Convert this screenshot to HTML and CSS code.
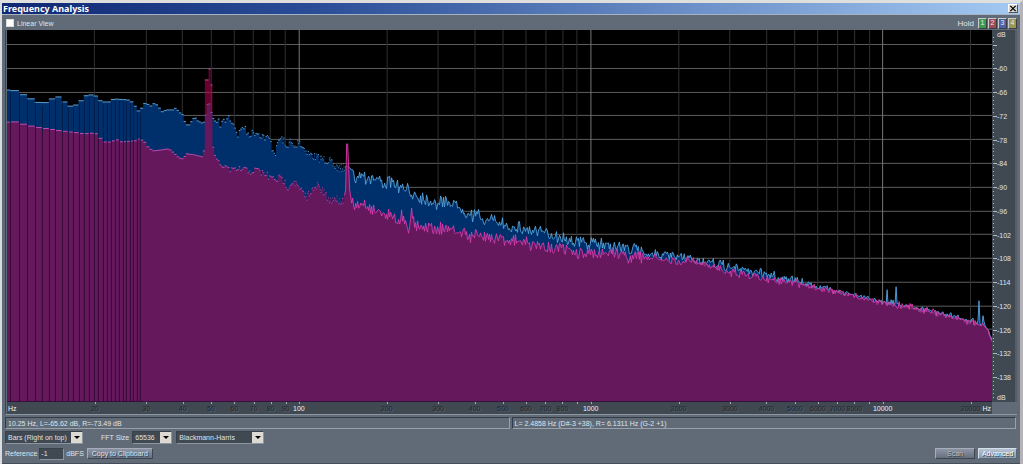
FILE: index.html
```html
<!DOCTYPE html>
<html lang="en">
<head>
  <meta charset="UTF-8">
  <title>Frequency Analysis</title>
  <link rel="stylesheet" href="styles.css">
</head>
<body>
  <div class="window">
    <header class="titlebar">
      <h1>Frequency Analysis</h1>
      <button class="close" type="button" aria-label="Close">
        <svg viewBox="0 0 9 9" width="9" height="9"><path d="M1.5 1.5l6 6M7.5 1.5l-6 6" stroke="#000" stroke-width="1.4"/></svg>
      </button>
    </header>

    <main class="content">
      <div class="toolbar">
        <label class="linear"><input type="checkbox"> Linear View</label>
        <div class="hold">
          <span>Hold</span>
          <button class="hold-btn green" type="button">1</button>
          <button class="hold-btn red" type="button">2</button>
          <button class="hold-btn blue" type="button">3</button>
          <button class="hold-btn yellow" type="button">4</button>
        </div>
      </div>

      <div class="graph">
        <svg id="plot" class="plot" viewBox="0 0 986 372" preserveAspectRatio="none"></svg>
        <div id="y-axis" class="y-axis"></div>
        <div id="x-axis" class="x-axis"></div>
      </div>

      <div class="status">
        <div class="status-cell">10.25 Hz, L=-65.62 dB, R=-73.49 dB</div>
        <div class="status-cell">L= 2.4858 Hz (D#-3 +38), R= 6.1311 Hz (G-2 +1)</div>
      </div>

      <form class="controls">
        <div class="row">
          <select class="mode" aria-label="Display mode"><option>Bars (Right on top)</option></select>
          <label class="fft" for="fft">FFT Size</label>
          <select class="size" id="fft"><option>65536</option></select>
          <select class="type" aria-label="Window type"><option>Blackmann-Harris</option></select>
        </div>
        <div class="row">
          <label for="ref">Reference</label>
          <input class="ref" id="ref" type="text" value="-1">
          <span class="unit">dBFS</span>
          <button class="btn copy" type="button">Copy to Clipboard</button>
          <button class="btn scan" type="button">Scan</button>
          <button class="btn advanced" type="button">Advanced</button>
        </div>
      </form>
    </main>
  </div>
  <script src="script.js"></script>
</body>
</html>
```
FILE: styles.css
```css
* {
  box-sizing: border-box;
}
body {
  margin: 0;
  background: #616b78;
  color: #dfe4ea;
  font-family: "Liberation Sans", Arial, sans-serif;
  font-size: 7px;
  line-height: 9px;
}
button, input, select {
  font: inherit;
  color: inherit;
  margin: 0;
}
.window {
  display: flex;
  flex-direction: column;
  min-height: 100vh;
  border-style: solid;
  border-width: 3px 3px 2px 2px;
  border-color: #dfe0dd #b5b2b8 #aaaab6 #d9dcdf;
}
.titlebar {
  display: flex;
  align-items: center;
  justify-content: space-between;
  height: 12px;
  padding: 0 2px 0 1px;
  background: linear-gradient(to right, #0f2873, #2a4c96 30%, #a4c9f2);
  border-bottom: 1px solid #a7b3c4;
}
.titlebar h1 {
  margin: 0;
  color: #fff;
  font: bold 9px/11px "Noto Sans", sans-serif;
}
.close {
  display: flex;
  align-items: center;
  justify-content: center;
  width: 10px;
  height: 9px;
  padding: 0;
  background: #d8d5ce;
  border: 1px solid;
  border-color: #fff #555 #555 #fff;
}
.content {
  flex: 1;
  display: flex;
  flex-direction: column;
  padding: 1px 3px 2px;
  border-bottom: 1px solid #454d58;
}
.toolbar {
  display: flex;
  justify-content: space-between;
  align-items: center;
  height: 14px;
}
.linear {
  display: flex;
  align-items: center;
  gap: 3px;
}
.linear input {
  appearance: none;
  width: 8px;
  height: 8px;
  margin-left: 1px;
  background: #fff;
  border: 1px solid #dcdcdc;
}
.hold {
  display: flex;
  align-items: center;
  gap: 1px;
}
.hold span {
  margin-right: 3px;
  font-size: 8px;
}
.hold-btn {
  width: 9px;
  height: 11px;
  padding: 0;
  font-size: 7px;
  line-height: 8px;
  color: #e9e9e9;
  border: 1px solid;
  border-color: #c5ccd0 #394048 #394048 #c5ccd0;
}
.green { background: #3f9a4b; }
.red { background: #a04a54; }
.blue { background: #4f62a8; }
.yellow { background: #9b9650; }

.graph {
  flex: 1;
  display: grid;
  grid-template-columns: 1fr 25px;
  grid-template-rows: 1fr 12px;
  padding: 0 0 0 1px;
  border-left: 1px solid #39424d;
  border-bottom: 1px solid #8d97a1;
}
.plot {
  display: block;
  width: 100%;
  height: 100%;
  min-height: 200px;
  background: #000;
}
.y-axis {
  position: relative;
  background: #404852;
  border-right: 2px solid #535e6a;
}
.x-axis {
  position: relative;
  background: #404852;
}
.tick {
  position: absolute;
  left: 1px;
  width: 1px;
  height: 1px;
  background: #b3bac0;
}
.tick.long {
  width: 4px;
}
.db {
  position: absolute;
  left: 5px;
  transform: translateY(-50%);
}
.db.top {
  top: 4px;
}
.db.bottom {
  bottom: 0;
  transform: none;
}
.x-tick {
  position: absolute;
  top: 0;
  width: 1px;
  height: 2px;
  background: #a5adb5;
}
.hz {
  position: absolute;
  top: 2px;
  transform: translateX(-50%);
  color: #20252b;
  text-shadow: 1px 1px #59626d;
}
.hz.major {
  color: #f1f3f5;
  text-shadow: none;
}
.hz.start {
  left: 1px;
  transform: none;
}
.hz.end {
  right: 1px;
  transform: none;
}

.status {
  display: grid;
  grid-template-columns: 1fr 1fr;
  gap: 2px;
  padding: 2px 1px 2px 0;
}
.status-cell {
  height: 12px;
  padding: 1px 2px 0;
  border: 1px solid;
  border-color: #333c46 #98a1aa #98a1aa #333c46;
}
.controls {
  display: flex;
  flex-direction: column;
  gap: 2px;
}
.row {
  display: flex;
  align-items: center;
  height: 14px;
}
select {
  appearance: none;
  height: 13px;
  padding: 0 13px 0 2px;
  border: 1px solid;
  border-color: #38414b #8b95a0 #8b95a0 #38414b;
  border-radius: 0;
  background: #404852 url("data:image/svg+xml,%3Csvg xmlns='http://www.w3.org/2000/svg' width='11' height='11'%3E%3Cpath fill='%23dcdad2' d='M0 0h11v11H0z'/%3E%3Cpath d='M3 4h6L6 7z'/%3E%3C/svg%3E") no-repeat right center;
}
.mode {
  width: 78px;
}
.fft {
  margin: 0 3px 0 18px;
}
.size {
  width: 40px;
}
.type {
  width: 88px;
  margin-left: 4px;
}
.ref {
  width: 25px;
  height: 12px;
  margin: 0 2px;
  padding: 0 1px;
  background: #404852;
  border: 1px solid;
  border-color: #38414b #8b95a0 #8b95a0 #38414b;
}
.unit {
  margin-right: 3px;
}
.btn {
  height: 11px;
  padding: 0;
  line-height: 9px;
  background: linear-gradient(#8d95a5, #666f80);
  border: 1px solid;
  border-color: #a5adba #3d4550 #3d4550 #a5adba;
  text-shadow: 1px 1px #363e49;
}
.copy {
  width: 66px;
}
.scan {
  width: 40px;
  margin-left: auto;
  color: #b3bac4;
}
.advanced {
  width: 39px;
  margin-left: 3px;
  background: linear-gradient(#b5c3d3, #8c9cb1);
  border-color: #d5dfe9 #59677a #59677a #d5dfe9;
  color: #fff;
}
```
FILE: script.js
```js
const W = 986;
const H = 372;
const MIN_HZ = 10;
const MAX_HZ = 23700;
const TOP_DB = -50.3;
const BOTTOM_DB = -144.2;
const BIN_HZ = 48000 / 65536;
const BARS_END = 338;

const hzToX = hz => W * Math.log10(hz / MIN_HZ) / Math.log10(MAX_HZ / MIN_HZ);
const dbToY = db => H * (TOP_DB - db) / (TOP_DB - BOTTOM_DB);

// averaged levels, x,y in plot units
const left = [
  0,60, 11,61, 19,67, 27,70, 34,74, 41,72, 48,67, 54,67, 59,74, 65,77, 71,74, 76,69, 80,65, 88,65, 91,69, 95,72,
  102,72, 104,70, 108,69, 121,70, 125,72, 128,76, 131,81, 134,81, 136,74, 140,73, 143,77, 148,73, 152,77, 155,82,
  160,80, 166,80, 169,78, 172,82, 176,85, 179,95, 183,95, 185,91, 188,87, 191,91, 195,93, 198,92, 200,78, 202,70,
  204,80, 206,88, 209,92, 214,94, 218,91, 222,87, 225,91, 228,96, 231,105, 234,101, 236,95, 240,103, 244,104,
  249,102, 253,104, 259,108, 263,109, 266,120, 269,123, 272,110, 274,109, 277,110, 279,119, 283,111, 287,118,
  290,117, 292,110, 295,116, 298,119, 301,123, 308,127, 315,129, 323,131, 327,136, 333,139, 341,136, 345,140,
  350,147, 355,144, 361,148, 373,150, 379,154, 387,153, 396,160, 403,162, 413,166, 421,170, 430,174, 438,172,
  447,173, 453,178, 463,185, 473,187, 483,191, 499,195, 513,198, 526,201, 540,204, 556,208, 566,211, 583,213,
  599,215, 623,219, 643,223, 668,227, 690,231, 713,235, 731,239, 759,244, 778,249, 793,252, 833,262, 873,271,
  923,281, 953,288, 978,295, 982,300, 986,311
];
const right = [
  0,93, 4,91, 11,93, 19,95, 27,97, 41,99, 54,101, 71,103, 76,104, 88,103, 91,106, 95,110, 99,113, 106,111, 110,110,
  114,112, 128,111, 131,109, 137,111, 141,117, 146,121, 155,120, 162,119, 167,123, 172,128, 176,129, 180,124,
  188,125, 195,127, 197,122, 198,50, 201,50, 201,39, 203,39, 203,55, 205,55, 206,115, 208,125, 211,131, 215,135,
  219,138, 224,141, 228,142, 231,139, 240,141, 251,141, 258,144, 265,149, 272,149, 276,150, 281,157, 287,151,
  291,157, 296,163, 300,168, 304,160, 308,161, 311,155, 314,160, 318,164, 323,172, 328,168, 333,171, 337,170,
  339,160, 340,114, 341,114, 343,160, 345,173, 351,177, 357,173, 363,178, 370,180, 377,184, 383,183, 389,191,
  397,185, 402,200, 404,190, 405,177, 406,185, 408,196, 413,199, 419,195, 428,198, 448,200, 463,206, 493,207,
  503,210, 523,214, 540,217, 556,220, 573,224, 593,225, 605,220, 618,226, 638,228, 658,230, 670,233, 683,231,
  703,236, 723,241, 739,244, 759,248, 778,251, 803,257, 833,263, 873,272, 913,279, 953,289, 978,296, 982,301,
  986,312
];

let seed = 7;
function random() {
  seed = (seed * 16807) % 2147483647;
  return seed / 2147483647;
}

function level(points, x) {
  let i = 0;
  while (i < points.length - 4 && points[i + 2] < x) i += 2;
  const t = Math.min(1, Math.max(0, (x - points[i]) / (points[i + 2] - points[i])));
  return points[i + 1] + t * (points[i + 3] - points[i + 1]);
}

function trace(points, spikes) {
  let tops = '';
  let fill = `M0 ${H}`;
  let line = '';

  // one flat bar for each FFT bin
  for (let k = 13; hzToX(k * BIN_HZ) < BARS_END; k++) {
    const x1 = Math.max(0, hzToX(k * BIN_HZ));
    const x2 = Math.min(BARS_END, hzToX((k + 1) * BIN_HZ));
    if (x2 <= 0) continue;
    const wobble = x1 > 210 ? (random() - 0.5) * 8 : 0;
    const y = level(points, (x1 + x2) / 2) + wobble;
    fill += `L${x1.toFixed(1)} ${y.toFixed(1)}H${x2.toFixed(1)}`;
    tops += `M${x1.toFixed(1)} ${y.toFixed(1)}H${x2.toFixed(1)}`;
  }

  // the bins get narrower than a pixel, so join them up
  for (let x = BARS_END; x <= W; x++) {
    const size = x < 345 ? 0 : x < 640 ? 8 : x < 800 ? 6 : x < 979 ? 4 : 1;
    let y = level(points, x) + (random() + random() - 1) * size;
    if (spikes[x]) y = spikes[x];
    line += `${line ? 'L' : 'M'}${x} ${y.toFixed(1)}`;
  }
  fill += line.replace('M', 'L') + `V${H}Z`;
  return { fill, tops, line };
}

function drawPlot() {
  let svg = '';
  for (let db = -54; db >= -138; db -= 6) {
    const y = Math.floor(dbToY(db)) + 0.5;
    svg += `<path d="M0 ${y}H${W}" stroke="#5d5d5d"/>`;
  }
  for (let decade = 10; decade <= 10000; decade *= 10) {
    for (let n = 1; n < 10; n++) {
      const hz = decade * n;
      if (hz <= MIN_HZ || hz > MAX_HZ) continue;
      const x = Math.floor(hzToX(hz)) + 0.5;
      svg += `<path d="M${x} 0V${H}" stroke="${n === 1 ? '#777' : '#303030'}"/>`;
    }
  }

  const l = trace(left, { 881: 260, 890: 257, 973: 271, 977: 286 });
  const r = trace(right, {});
  svg += `<path d="${l.fill}" fill="#00306c"/>`;
  svg += `<path d="${l.tops}" stroke="#5d9fce" fill="none"/>`;
  svg += `<path d="${l.line}" stroke="#55a5e0" fill="none" stroke-width="0.9"/>`;
  svg += `<path d="${r.fill}" fill="#b60650" fill-opacity="0.56"/>`;
  svg += `<path d="${r.tops}" stroke="#c04bae" fill="none"/>`;
  svg += `<path d="${r.line}" stroke="#d83bab" fill="none" stroke-width="0.9"/>`;

  // dark gaps between the wide bars
  for (let k = 14; k < 40; k++) {
    const x = Math.round(hzToX(k * BIN_HZ)) + 0.5;
    const yl = level(left, x) + 2;
    const yr = level(right, x) + 2;
    svg += `<path d="M${x} ${yl}V${yr}" stroke="#001d4a"/><path d="M${x} ${yr}V${H}" stroke="#350a38"/>`;
  }
  document.getElementById('plot').innerHTML = svg;
}

function drawYAxis() {
  let html = '<span class="db top">dB</span><span class="db bottom">dB</span>';
  for (let db = -52; db > -144; db--) {
    const top = dbToY(db) / H * 100;
    html += `<i class="tick${db % 6 === 0 ? ' long' : ''}" style="top: ${top.toFixed(2)}%"></i>`;
    if (db % 6 === 0 && db < -54) {
      html += `<span class="db" style="top: ${top.toFixed(2)}%">${db}</span>`;
    }
  }
  document.getElementById('y-axis').innerHTML = html;
}

function drawXAxis() {
  let html = '<span class="hz major start">Hz</span><span class="hz major end">Hz</span>';
  for (let decade = 10; decade <= 10000; decade *= 10) {
    for (let n = 1; n < 10; n++) {
      const hz = decade * n;
      if (hz <= MIN_HZ || hz > MAX_HZ) continue;
      const pos = (hzToX(hz) / W * 100).toFixed(2);
      html += `<i class="x-tick" style="left: ${pos}%"></i>`;
      if (n < 9 || decade === 10) {
        html += `<span class="hz${n === 1 ? ' major' : ''}" style="left: ${pos}%">${hz}</span>`;
      }
    }
  }
  document.getElementById('x-axis').innerHTML = html;
}

drawPlot();
drawYAxis();
drawXAxis();
```
